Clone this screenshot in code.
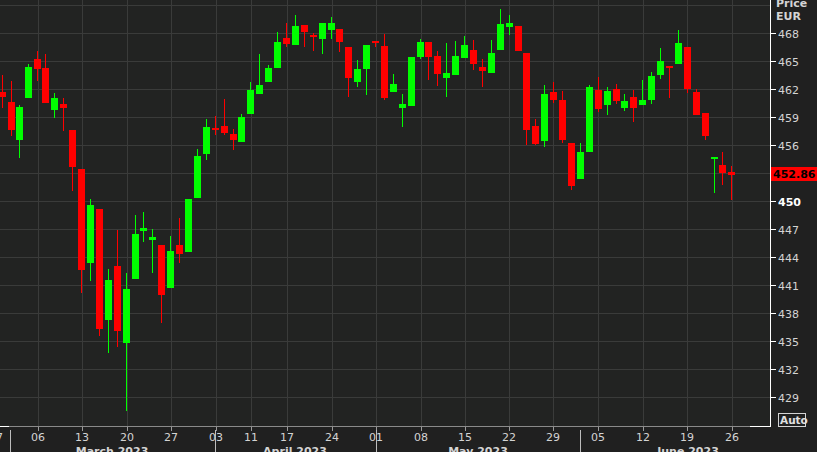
type Candle = [number, number, number, number, number, 0 | 1];

// x, bodyTop, bodyBottom, wickTop, wickBottom, up
const candles: Candle[] = [
  [2, 92, 97, 75, 108, 0],
  [11, 102, 130, 81, 136, 0],
  [19, 107, 140, 105, 158, 1],
  [28, 67, 98, 64, 98, 1],
  [37, 59, 69, 51, 81, 0],
  [45, 68, 103, 54, 103, 0],
  [54, 98, 110, 93, 118, 1],
  [63, 104, 108, 98, 131, 0],
  [72, 130, 167, 130, 191, 0],
  [81, 169, 270, 169, 293, 0],
  [90, 205, 263, 199, 281, 1],
  [99, 209, 329, 209, 336, 0],
  [108, 280, 320, 269, 353, 1],
  [117, 266, 331, 230, 347, 0],
  [126, 289, 343, 273, 411, 1],
  [135, 234, 279, 215, 279, 1],
  [143, 228, 231, 212, 242, 1],
  [152, 237, 240, 229, 273, 1],
  [161, 245, 295, 245, 323, 0],
  [170, 251, 288, 236, 288, 1],
  [179, 245, 254, 218, 263, 0],
  [188, 199, 252, 199, 252, 1],
  [197, 156, 198, 149, 198, 1],
  [206, 127, 154, 119, 160, 1],
  [215, 128, 130, 116, 135, 0],
  [224, 126, 133, 99, 135, 0],
  [233, 134, 140, 129, 150, 0],
  [241, 117, 142, 114, 142, 1],
  [250, 90, 114, 82, 114, 1],
  [259, 85, 94, 54, 94, 1],
  [268, 68, 82, 65, 82, 1],
  [277, 42, 68, 32, 68, 1],
  [286, 38, 44, 23, 47, 0],
  [295, 26, 45, 15, 45, 1],
  [304, 25, 32, 25, 47, 0],
  [313, 35, 37, 33, 51, 0],
  [322, 23, 39, 23, 54, 1],
  [331, 23, 30, 17, 39, 1],
  [339, 29, 42, 29, 52, 0],
  [348, 47, 78, 47, 97, 0],
  [357, 69, 82, 60, 87, 1],
  [366, 45, 69, 45, 95, 1],
  [375, 41, 43, 41, 47, 0],
  [384, 46, 98, 34, 100, 0],
  [393, 84, 92, 74, 92, 1],
  [402, 104, 108, 94, 127, 1],
  [411, 57, 106, 57, 106, 1],
  [420, 42, 57, 39, 59, 1],
  [428, 42, 57, 42, 80, 0],
  [437, 56, 74, 51, 86, 0],
  [446, 73, 78, 43, 97, 1],
  [455, 56, 75, 41, 75, 1],
  [464, 45, 58, 36, 58, 1],
  [473, 50, 64, 40, 70, 0],
  [482, 67, 71, 59, 87, 0],
  [491, 53, 73, 40, 73, 1],
  [500, 24, 50, 9, 50, 1],
  [509, 23, 27, 15, 35, 1],
  [518, 26, 51, 26, 51, 0],
  [526, 53, 130, 53, 145, 0],
  [535, 126, 144, 119, 145, 0],
  [544, 94, 141, 85, 147, 1],
  [553, 92, 100, 82, 103, 0],
  [562, 100, 140, 91, 143, 0],
  [571, 143, 186, 143, 190, 0],
  [580, 152, 179, 143, 179, 1],
  [589, 87, 152, 85, 152, 1],
  [598, 90, 109, 77, 112, 0],
  [607, 91, 105, 87, 115, 1],
  [616, 89, 101, 84, 104, 0],
  [624, 101, 108, 94, 111, 1],
  [633, 97, 108, 90, 122, 0],
  [642, 100, 105, 80, 105, 1],
  [651, 76, 100, 72, 104, 1],
  [660, 61, 75, 48, 79, 1],
  [669, 66, 68, 66, 98, 0],
  [678, 43, 64, 30, 64, 1],
  [687, 47, 89, 47, 93, 0],
  [696, 92, 115, 89, 115, 0],
  [705, 113, 136, 113, 140, 0],
  [714, 157, 158, 157, 193, 1],
  [722, 165, 173, 152, 185, 0],
  [731, 172, 175, 166, 200, 0],
];

const priceTicks = [468, 465, 462, 459, 456, 450, 447, 444, 441, 438, 435, 432, 429];
const priceY = (p: number) => 33 + (468 - p) * (28 / 3);
const gridYs = [5, ...[468, 465, 462, 459, 456, 453, 450, 447, 444, 441, 438, 435, 432, 429].map(priceY)];

const dates: [string, number][] = [
  ["06", 38], ["13", 82], ["20", 127], ["27", 171], ["03", 216], ["11", 251], ["17", 287],
  ["24", 332], ["01", 376], ["08", 421], ["15", 465], ["22", 509], ["29", 553], ["05", 598],
  ["12", 643], ["19", 687], ["26", 732],
];

const months: [string, number][] = [
  ["March 2023", 112], ["April 2023", 295], ["May 2023", 478], ["June 2023", 688],
];

export default function App() {
  return (
    <div className="h-[452px] w-[817px] overflow-hidden bg-[#202020] font-['DejaVu_Sans',sans-serif]">
      <svg width={817} height={452} className="block" fontFamily="'DejaVu Sans', sans-serif">
        <rect x={0} y={0} width={770} height={426} fill="#222322" />
        {gridYs.map((y) => (
          <line key={y} x1={0} x2={770} y1={y + 0.5} y2={y + 0.5} stroke="#3a3b3a" />
        ))}
        {dates.map(([, x]) => (
          <line key={x} x1={x + 0.5} x2={x + 0.5} y1={0} y2={426} stroke="#3a3b3a" />
        ))}

        {candles.map(([x, bt, bb, wt, wb, up]) => {
          const c = up ? "#00ff00" : "#ff0000";
          return (
            <g key={x}>
              <line x1={x + 0.5} x2={x + 0.5} y1={wt} y2={wb} stroke={c} />
              <rect x={x - 3} y={bt} width={7} height={Math.max(bb - bt, 2)} fill={c} />
            </g>
          );
        })}

        {/* axes */}
        <line x1={0} x2={770} y1={426.5} y2={426.5} stroke="#8a8a8a" />
        <line x1={0} x2={9} y1={426.5} y2={426.5} stroke="#ffffff" />
        <line x1={750} x2={771} y1={426.5} y2={426.5} stroke="#ffffff" />
        <line x1={770.5} x2={770.5} y1={0} y2={427} stroke="#ffffff" />

        {dates.map(([d, x]) => (
          <g key={d + x}>
            <line x1={x + 0.5} x2={x + 0.5} y1={427} y2={431} stroke="#9a9a9a" />
            <text x={x} y={441} fontSize={11} fill="#d4d4d4" textAnchor="middle">{d}</text>
          </g>
        ))}
        <text x={-4} y={441} fontSize={11} fill="#d4d4d4">7</text>
        {[10, 215, 376, 580].map((x) => (
          <line key={x} x1={x + 0.5} x2={x + 0.5} y1={430} y2={452} stroke="#bdbdbd" />
        ))}
        {months.map(([m, x]) => (
          <text key={m} x={x} y={455} fontSize={11} fontWeight={700} fill="#d4d4d4" textAnchor="middle">{m}</text>
        ))}

        {priceTicks.map((p) => {
          const y = priceY(p);
          return (
            <g key={p}>
              <line x1={771} x2={776} y1={y + 0.5} y2={y + 0.5} stroke="#ffffff" />
              <text x={778} y={y + 4.5} fontSize={11} fill={p === 450 ? "#ffffff" : "#d4d4d4"} fontWeight={p === 450 ? 700 : 400}>{p}</text>
            </g>
          );
        })}
        <text x={776} y={7} fontSize={11} fontWeight={700} fill="#d4d4d4">Price</text>
        <text x={776} y={20} fontSize={11} fontWeight={700} fill="#d4d4d4">EUR</text>

        <rect x={771} y={167} width={46} height={14} fill="#ff0000" />
        <text x={773} y={178} fontSize={11} fontWeight={700} fill="#000000">452.86</text>

        <rect x={778.5} y={413.5} width={27} height={13} fill="none" stroke="#d4d4d4" />
        <text x={780} y={424} fontSize={10.5} fontWeight={700} fill="#e0e0e0">Auto</text>
      </svg>
    </div>
  );
}
